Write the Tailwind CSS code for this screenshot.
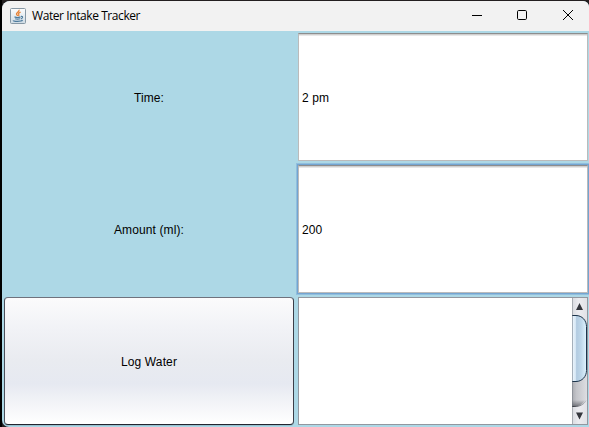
<!DOCTYPE html>
<html lang="en"><head><meta charset="utf-8"><title>Water Intake Tracker</title>
<script src="https://cdn.jsdelivr.net/npm/@tailwindcss/browser@4"></script></head>
<body class="bg-black w-[589px] h-[427px] overflow-hidden text-black text-[12px] tracking-[0.12px] font-['Liberation_Sans',Arial,sans-serif]">
<div class="h-[427px] bg-[#231f20] border-l-2 border-black pt-px">
<div class="h-[426px] flex flex-col rounded-tl-[8px] rounded-tr-[6px] rounded-bl-[7px] overflow-hidden bg-[#add8e6]">
<header class="h-[30px] shrink-0 bg-[#f2f2f2] flex items-center pl-2">
<svg class="w-4 h-4 shrink-0" viewBox="0 0 16 16" fill="none">
<defs><linearGradient id="ic" x1="0" y1="0" x2="0" y2="1"><stop offset="0" stop-color="#fdfdfd"/><stop offset="1" stop-color="#cfdbe4"/></linearGradient></defs>
<rect x=".5" y=".5" width="15" height="15" rx="1" fill="url(#ic)" stroke="#8798a5"/>
<path d="M9 1.800c1 2.200-3.300 2.800-2.500 4.400.2.600.9 1 1.100 1.800M10.600 4.200C8.600 5 8 5.800 8.800 6.600c.4.600 0 1-.4 1.500" stroke="#e8853a" stroke-width="1.300"/>
<path d="M4.500 8.900c1.500.6 4.500.6 6 0M5.200 10.700c1.300.5 3.400.5 4.700 0M11 8.400c2.200-.3 2 1.900-.2 2.500M3.300 12.400c-.3 1.300 8 1.500 9.300-.2" stroke="#4d7b9d" stroke-width="1.200"/>
</svg>
<h1 class="ml-[6px] whitespace-nowrap text-[12px] leading-4 tracking-[-0.42px] font-['Open_Sans','Noto_Sans',sans-serif]">Water Intake Tracker</h1>
<div class="ml-auto -mr-[2px] flex items-center">
<svg class="w-[46px] h-[30px]" viewBox="0 0 46 30" fill="none" stroke="#000"><path d="M18 14.500h10"/></svg>
<svg class="w-[46px] h-[30px]" viewBox="0 0 46 30" fill="none" stroke="#000"><rect x="17.500" y="9.500" width="9" height="9" rx="1.200"/></svg>
<svg class="w-[45px] h-[30px]" viewBox="0 0 45 30" fill="none" stroke="#000"><path d="M17 9l10 10M27 9L17 19"/></svg>
</div>
</header>
<main class="grid grid-cols-[290px_290px] grid-rows-[128px_128px_128px] gap-1 pt-[2px] pl-[2px]">
<div class="flex items-center justify-center pt-[2px]"><span>Time:</span></div>
<div class="bg-white border border-[#bbb] border-t-[#8d8d8d] shadow-[inset_0_1px_0_#cfcfcf,inset_0_2px_0_#e8e8e8] flex items-center pl-[3px] pt-[2px]">2 pm</div>
<div class="flex items-center justify-center pt-[2px]"><span>Amount (ml):</span></div>
<div class="bg-white border border-[#bbb] border-t-[#8d8d8d] shadow-[inset_0_1px_0_#cfcfcf,inset_0_2px_0_#e8e8e8,0_0_0_1px_#73a4d1,0_0_0_2px_#90bedd] flex items-center pl-[3px] pt-[2px]">200</div>
<button class="rounded-[4px] border border-[#6f727d] border-b-[#22252e] border-l-[#4c4f59] border-r-[#3b3e48] bg-[linear-gradient(#fbfbfc_0%,#f1f2f6_25%,#e9ebf0_50%,#e6e9f1_68%,#f4f5f8_85%,#ffffff_100%)] pt-[2px] tracking-[0.12px] shadow-[0_1px_0_#98c0ce]">Log Water</button>
<div class="bg-white border border-[#92979f] flex justify-end">
<svg class="w-[15px] h-[126px]" viewBox="0 0 15 126">
<defs>
<linearGradient id="tr"><stop offset="0" stop-color="#a9abb1"/><stop offset=".3" stop-color="#c3c4c9"/><stop offset="1" stop-color="#dddee2"/></linearGradient>
<linearGradient id="th"><stop offset="0" stop-color="#9eb9d3"/><stop offset=".13" stop-color="#e9f3fb"/><stop offset=".3" stop-color="#d5e6f4"/><stop offset=".36" stop-color="#b2cbe1"/><stop offset=".65" stop-color="#bed7ea"/><stop offset="1" stop-color="#e0f4ff"/></linearGradient>
<linearGradient id="bt"><stop offset="0" stop-color="#d9dbe0"/><stop offset=".45" stop-color="#ececf0"/><stop offset="1" stop-color="#e1e2e7"/></linearGradient>
<linearGradient id="lip" gradientUnits="userSpaceOnUse" x1="0" y1="0" x2="14" y2="0"><stop offset="0" stop-color="#303239"/><stop offset="1" stop-color="#bdbfc5"/></linearGradient>
<linearGradient id="sh" x1="0" y1="0" x2="0" y2="1"><stop offset="0" stop-color="#55575e" stop-opacity="0"/><stop offset="1" stop-color="#55575e" stop-opacity=".75"/></linearGradient>
</defs>
<rect width="15" height="126" fill="url(#tr)"/>
<path d="M0 102h13c-2 4-6 6.500-11 6.500H0z" fill="url(#sh)"/>
<path d="M0 0h15v26C15 20 10 17 0 17z" fill="url(#bt)"/>
<path d="M0 126h15V97c0 7-5 12-12 12H0z" fill="url(#bt)"/>
<path d="M0 108.500h2c6 0 10-2 12-6" fill="none" stroke="url(#lip)"/>
<path d="M-1 17.500h5c6 0 10.500 5 10.500 11v44c0 6-4.500 11-10.500 11h-5z" fill="url(#th)" stroke="#1c344b"/>
<path d="M4 12l3.500-7 3.500 7zM4 114.500l3.500 7 3.500-7z" fill="#34363c"/>
<path d="M.5 0v126" stroke="#6b7079" stroke-opacity=".45"/>
</svg>
</div>
</main></div></div>
</body></html>
